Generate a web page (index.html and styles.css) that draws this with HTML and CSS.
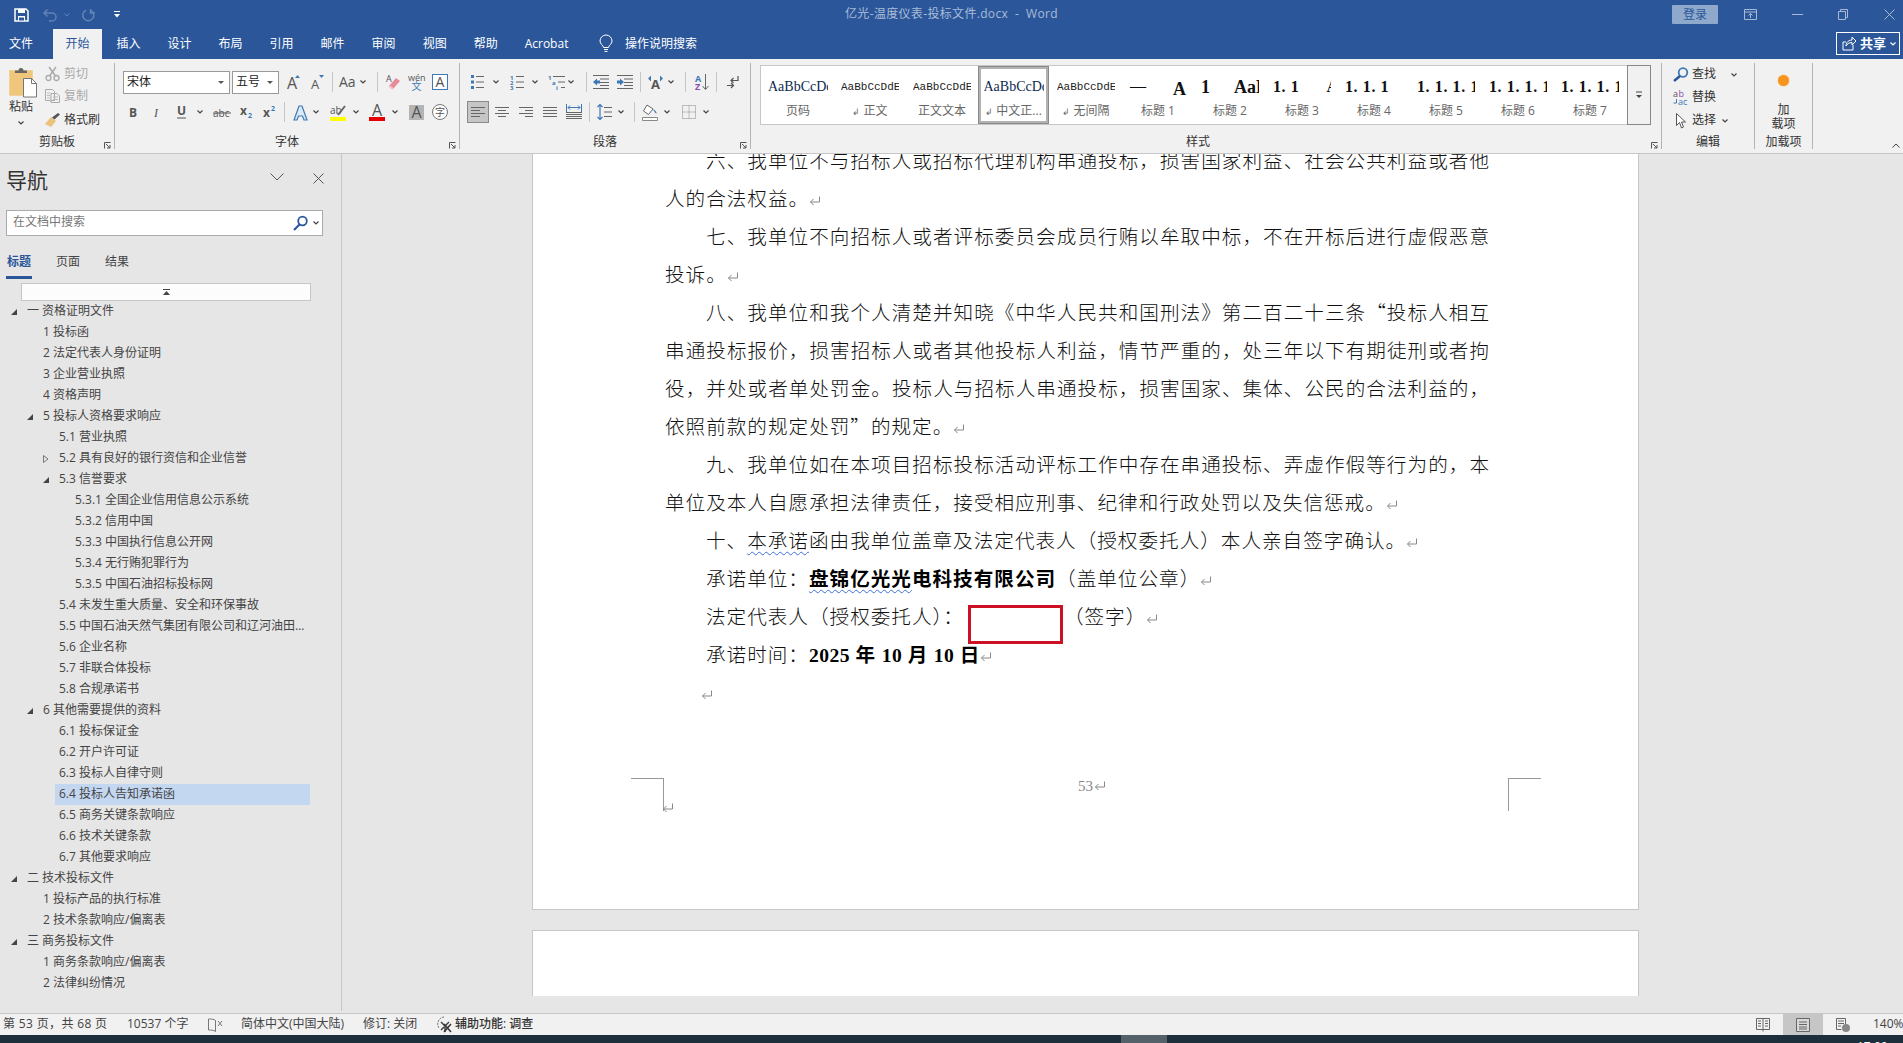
FILE: index.html
```html
<!DOCTYPE html>
<html lang="zh-CN">
<head>
<meta charset="utf-8">
<title>亿光-温度仪表-投标文件.docx - Word</title>
<link rel="stylesheet" href="styles.css">
</head>
<body>
<svg class="sprite" xmlns="http://www.w3.org/2000/svg">
  <symbol id="chev" viewBox="0 0 6 4"><path d="M.5.5 3 3 5.500.5" fill="none" stroke="#444" stroke-width="1.200"/></symbol>
  <symbol id="launch" viewBox="0 0 7 7"><path d="M.5 6.500V.5h6M2 2l4 4M3 6h3V3" fill="none" stroke="#555" stroke-width="1"/></symbol>
  <symbol id="lines" viewBox="0 0 14 12"><path d="M0 1.500h14M0 4.500h14M0 7.500h14M0 10.500h14" fill="none" stroke="#666" stroke-width="1"/></symbol>
  <symbol id="ret" viewBox="0 0 12 12"><path d="M10.500 1.500v5.500H1.500M4.500 4 1.500 7l3 3" fill="none" stroke="#888" stroke-width="1"/></symbol>
  <symbol id="open" viewBox="0 0 6 6"><path d="M6 0V6H0Z" fill="#444"/></symbol>
  <symbol id="closed" viewBox="0 0 6 8"><path d="M.5.5 5 4 .5 7.500Z" fill="none" stroke="#777"/></symbol>
</svg>
<div class="app">
  <header class="titlebar">
    <div class="qat">
      <svg class="ml14" width="15" height="14" viewBox="0 0 15 14"><path d="M1 1h11l2 2v10H1Z" fill="none" stroke="#fff" stroke-width="1.500"/><path d="M4 1h7v4H4ZM4 8h7v5H4Z" fill="#fff"/><path d="M5 9.500h5v3H5Z" fill="#2b579a"/></svg>
      <svg class="ml14" width="14" height="14" viewBox="0 0 14 14"><path d="M4.500 1.500 1 5l3.500 3.500M1 5h8a4 4 0 0 1 0 8H6" fill="none" stroke="#6283b5" stroke-width="1.500"/></svg>
      <svg class="ml7" width="6" height="4" viewBox="0 0 6 4"><path d="M.5.5 3 3 5.500.5" fill="none" stroke="#6283b5"/></svg>
      <svg class="ml11" width="14" height="14" viewBox="0 0 14 14"><path d="M5 2.200a5.500 5.500 0 1 0 4.500 0M9.500 1v4H14" fill="none" stroke="#6283b5" stroke-width="1.500"/></svg>
      <svg class="ml19" width="6" height="7" viewBox="0 0 6 7"><path d="M0 .5h6" stroke="#fff"/><path d="M0 3h6L3 6.500Z" fill="#fff"/></svg>
    </div>
    <div class="doc-title">亿光-温度仪表-投标文件.docx &nbsp;-&nbsp; Word</div>
    <div class="winctl">
      <span class="login">登录</span>
      <svg class="ml26" width="13" height="11" viewBox="0 0 13 11"><path d="M.5.500h12v10H.500ZM.5 3h12M6.500 9V4.500M4.500 6.500l2-2 2 2" fill="none" stroke="#a6b9d6"/></svg>
      <svg class="ml35" width="11" height="1" viewBox="0 0 11 1"><path d="M0 .5h11" stroke="#a6b9d6"/></svg>
      <svg class="ml35" width="10" height="11" viewBox="0 0 10 11"><path d="M.5 2.500h7v8h-7ZM2.500 2.500V.5h7v8h-2" fill="none" stroke="#a6b9d6"/></svg>
      <svg class="ml36" width="11" height="11" viewBox="0 0 11 11"><path d="M.5.500l10 10M10.500.500l-10 10" stroke="#a6b9d6"/></svg>
      <span class="ml8"></span>
    </div>
  </header>

  <nav class="tabs">
    <span class="tab tab-file">文件</span>
    <span class="tab tab-on">开始</span>
    <span class="tab">插入</span>
    <span class="tab">设计</span>
    <span class="tab">布局</span>
    <span class="tab">引用</span>
    <span class="tab">邮件</span>
    <span class="tab">审阅</span>
    <span class="tab">视图</span>
    <span class="tab">帮助</span>
    <span class="tab">Acrobat</span>
    <svg class="bulb" width="14" height="18" viewBox="0 0 14 18"><path d="M4.500 12.500C4 10 1 9 1 6a6 6 0 0 1 12 0c0 3-3 4-3.500 6.500ZM5 14.500h4M5.500 16.500h3" fill="none" stroke="#fff"/></svg>
    <span class="tell">操作说明搜索</span>
    <span class="share">
      <svg width="14" height="15" viewBox="0 0 14 15"><path d="M4 6H1v8h10v-5M4 10c0-4 3-6 6-6V1l4 4-4 4V6.500C7 6.500 5 8 4 10Z" fill="none" stroke="#fff"/></svg>
      <b>共享</b>
      <svg width="6" height="4" viewBox="0 0 6 4"><path d="M.5.5 3 3 5.500.5" fill="none" stroke="#fff" stroke-width="1.200"/></svg>
    </span>
  </nav>

  <section class="ribbon">
    <div class="grp g-clip">
      <div class="clip-body">
        <div class="paste">
          <svg width="28" height="30" viewBox="0 0 28 30"><path d="M1 3h22v24H1Z" fill="#f0c67c" stroke="#f0c67c" stroke-width="1.500"/><path d="M6 5V2.500h3.500a2.500 2.500 0 0 1 5 0H18V5Z" fill="#666"/><path d="M14.500 10.500h8l5 5v13.500h-13Z" fill="#fff" stroke="#777"/><path d="M22.500 10.500v5h5" fill="none" stroke="#777"/></svg>
          <span class="paste-t">粘贴</span>
          <svg class="paste-c" width="6" height="4"><use href="#chev"/></svg>
        </div>
        <div class="clip-cmds">
          <div class="cmd dim"><svg width="15" height="14" viewBox="0 0 15 14"><circle cx="3.500" cy="11" r="2.500" fill="none" stroke="#aaa" stroke-width="1.300"/><circle cx="11.500" cy="11" r="2.500" fill="none" stroke="#aaa" stroke-width="1.300"/><path d="M4.500 9 11 0M10.500 9 4 0" stroke="#aaa" stroke-width="1.500"/></svg><span>剪切</span></div>
          <div class="cmd dim"><svg width="15" height="14" viewBox="0 0 15 14"><path d="M.5.500h7l2 2v9h-9ZM6 4.500h6l2.500 2.500v6.500H6Z" fill="#f1f1f1" stroke="#aaa"/><path d="M2 4h3M2 6.500h3M2 9h3M8 8h5M8 10.500h5" stroke="#bbb"/></svg><span>复制</span></div>
          <div class="cmd cmd3"><svg width="15" height="14" viewBox="0 0 15 14"><path d="M0 11 6 4l5 4-5 6Z" fill="#ecc27c"/><path d="M7 4.500 9.500 6.500 15 1.500 13 0Z" fill="#555"/></svg><span>格式刷</span></div>
        </div>
      </div>
      <div class="glabel">剪贴板<svg class="launch" width="7" height="7"><use href="#launch"/></svg></div>
    </div>

    <div class="grp g-font">
      <div class="rows">
        <div class="row">
          <span class="combo ml8 c-font"><span>宋体</span><i></i></span>
          <span class="combo ml2 c-size"><span>五号</span><i></i></span>
          <svg class="ml8" width="14" height="18" viewBox="0 0 14 18"><text x="0" y="16" class="t14">A</text><path d="M8 5 10.500 2 13 5Z" fill="#3f79b5"/></svg>
          <svg class="ml10" width="14" height="18" viewBox="0 0 14 18"><text x="0" y="16" class="t12">A</text><path d="M8 2h5l-2.500 3Z" fill="#3f79b5"/></svg>
          <span class="vsep ml7"></span>
          <svg class="ml6" width="16" height="14" viewBox="0 0 16 14"><text x="0" y="12" class="t13">Aa</text></svg>
          <svg class="ml5" width="6" height="4"><use href="#chev"/></svg>
          <span class="vsep ml11"></span>
          <svg class="ml8" width="14" height="18" viewBox="0 0 14 18"><text x="0" y="9" class="t9">A</text><path d="M3 13 10 5l4 3-7 8Z" fill="#e88a9a"/><path d="M3 13l4 3" stroke="#f4c2cb" stroke-width="2"/></svg>
          <svg class="ml8" width="17" height="18" viewBox="0 0 17 18"><text x="0" y="7.500" class="t9">wén</text><text x="3.500" y="17" class="t10b">文</text></svg>
          <svg class="ml7" width="16" height="16" viewBox="0 0 16 16"><rect x=".5" y=".5" width="15" height="15" fill="#fff" stroke="#3f79b5"/><text x="3.500" y="13" class="t13">A</text></svg>
        </div>
        <div class="row">
          <svg class="ml14" width="9" height="12" viewBox="0 0 9 12"><text x="0" y="11" class="t12b">B</text></svg>
          <svg class="ml16" width="7" height="12" viewBox="0 0 7 12"><text x="0" y="11" class="t12i">I</text></svg>
          <svg class="ml16" width="9" height="14" viewBox="0 0 9 14"><text x="0" y="10" class="t12b">U</text><path d="M0 13h9" stroke="#555"/></svg>
          <svg class="ml11" width="6" height="4"><use href="#chev"/></svg>
          <svg class="ml10" width="18" height="12" viewBox="0 0 18 12"><text x="0" y="11" class="t10">abc</text><path d="M0 7h18" stroke="#555"/></svg>
          <svg class="ml9" width="12" height="14" viewBox="0 0 12 14"><text x="0" y="10" class="t12b">x</text><text x="8" y="13" class="t7b">2</text></svg>
          <svg class="ml11" width="12" height="14" viewBox="0 0 12 14"><text x="0" y="12" class="t12b">x</text><text x="8" y="6" class="t7b">2</text></svg>
          <span class="vsep ml9"></span>
          <svg class="ml8" width="15" height="17" viewBox="0 0 15 17"><path d="M1 16 6 2h3l5 14h-3L9.500 12h-4L4 16Z" fill="#dbe8f6" stroke="#3f79b5" stroke-width="1.200"/></svg>
          <svg class="ml5" width="6" height="4"><use href="#chev"/></svg>
          <svg class="ml11" width="16" height="17" viewBox="0 0 16 17"><text x="0" y="10" class="t10">ab</text><path d="M8 11 15 2" stroke="#666" stroke-width="2"/><path d="M0 13h16v4H0Z" fill="#ff0"/></svg>
          <svg class="ml7" width="6" height="4"><use href="#chev"/></svg>
          <svg class="ml10" width="16" height="17" viewBox="0 0 16 17"><text x="3" y="12" class="t14">A</text><path d="M0 13h16v4H0Z" fill="#e60000"/></svg>
          <svg class="ml7" width="6" height="4"><use href="#chev"/></svg>
          <svg class="ml11" width="15" height="15" viewBox="0 0 15 15"><path d="M0 0h15v15H0Z" fill="#b4b4b4"/><text x="2.500" y="13" class="t14">A</text></svg>
          <svg class="ml8" width="16" height="16" viewBox="0 0 16 16"><circle cx="8" cy="8" r="7.500" fill="#fff" stroke="#777"/><text x="3" y="12" class="t10">字</text></svg>
        </div>
      </div>
      <div class="glabel">字体<svg class="launch" width="7" height="7"><use href="#launch"/></svg></div>
    </div>

    <div class="grp g-para">
      <div class="rows">
        <div class="row">
          <svg class="ml11" width="13" height="14" viewBox="0 0 13 14"><path d="M0 0h3v3H0ZM0 5.500h3v3H0ZM0 11h3v3H0Z" fill="#3f79b5"/><path d="M5 1.500h8M5 7h8M5 12.500h8" stroke="#666"/></svg>
          <svg class="ml9" width="6" height="4"><use href="#chev"/></svg>
          <svg class="ml11" width="14" height="16" viewBox="0 0 14 16"><text x="0" y="5.500" class="t6">1</text><text x="0" y="11" class="t6">2</text><text x="0" y="16" class="t6">3</text><path d="M6 2.500h8M6 8h8M6 13.500h8" stroke="#666"/></svg>
          <svg class="ml8" width="6" height="4"><use href="#chev"/></svg>
          <svg class="ml10" width="17" height="16" viewBox="0 0 17 16"><text x="0" y="5.500" class="t6">1</text><text x="4" y="11" class="t6">a</text><text x="8" y="16" class="t6">i</text><path d="M5 2.500h12M10 8h7M13 13.500h4" stroke="#666"/></svg>
          <svg class="ml3" width="6" height="4"><use href="#chev"/></svg>
          <span class="vsep ml12"></span>
          <svg class="ml6" width="16" height="14" viewBox="0 0 16 14"><path d="M0 .5h16M7 4h9M7 7.500h9M7 10.500h9M0 13.500h16" stroke="#666"/><path d="M0 7l4-3.500v2h3v3H4v2Z" fill="#3f79b5"/></svg>
          <svg class="ml8" width="16" height="14" viewBox="0 0 16 14"><path d="M0 .5h16M7 4h9M7 7.500h9M7 10.500h9M0 13.500h16" stroke="#666"/><path d="M7 7 3 3.500v2H0v3h3v2Z" fill="#3f79b5"/></svg>
          <span class="vsep ml7"></span>
          <svg class="ml7" width="15" height="16" viewBox="0 0 15 16"><text x="3" y="15" class="t13b">A</text><path d="M0 4.500 3 1.500v6ZM15 4.500 12 1.500v6Z" fill="#3f79b5"/></svg>
          <svg class="ml5" width="6" height="4"><use href="#chev"/></svg>
          <span class="vsep ml11"></span>
          <svg class="ml9" width="14" height="17" viewBox="0 0 14 17"><text x="0" y="7.500" class="t8blue">A</text><text x="0" y="16" class="t8pur">Z</text><path d="M10.500 0v15M7.500 12l3 3.500 3-3.500" fill="none" stroke="#666"/></svg>
          <span class="vsep ml7"></span>
          <svg class="ml10" width="11" height="13" viewBox="0 0 11 13"><path d="M11 0v4.500H4M6.500 2 4 4.500 6.500 7" fill="none" stroke="#555" stroke-width="1.200"/><path d="M0 9.500h6M4 7l2.500 2.500L4 12" fill="none" stroke="#555" stroke-width="1.200"/></svg>
        </div>
        <div class="row">
          <span class="align-on ml7"><svg width="14" height="12" viewBox="0 0 14 12"><path d="M0 1.500h14M0 4.500h9M0 7.500h14M0 10.500h9" stroke="#666"/></svg></span>
          <svg class="ml6" width="14" height="12" viewBox="0 0 14 12"><path d="M0 1.500h14M3 4.500h8M0 7.500h14M3 10.500h8" stroke="#666"/></svg>
          <svg class="ml10" width="14" height="12" viewBox="0 0 14 12"><path d="M0 1.500h14M6 4.500h8M0 7.500h14M6 10.500h8" stroke="#666"/></svg>
          <svg class="ml10" width="14" height="12"><use href="#lines"/></svg>
          <svg class="ml9" width="16" height="16" viewBox="0 0 16 16"><path d="M.5 0v8M15.500 0v8M2 3.500h12M4 1.500l-2 2 2 2M12 1.500l2 2-2 2" fill="none" stroke="#3f79b5"/><path d="M0 8.500h16M0 10.500h16M0 12.500h16M0 14.500h16" stroke="#666"/></svg>
          <span class="vsep ml7"></span>
          <svg class="ml7" width="15" height="16" viewBox="0 0 15 16"><path d="M3 0v16M.5 3 3 .5 5.500 3M.5 13 3 15.500 5.500 13" fill="none" stroke="#3f79b5" stroke-width="1.200"/><path d="M7 3.500h8M7 8h8M7 12.500h8" stroke="#666"/></svg>
          <svg class="ml6" width="6" height="4"><use href="#chev"/></svg>
          <span class="vsep ml10"></span>
          <svg class="ml7" width="16" height="17" viewBox="0 0 16 17"><path d="M5 1 1.500 7l5 3.500L11 5Z" fill="#fff" stroke="#666"/><path d="M11 5c2 1 4 3 3.500 5C13 9 12 7 11 5Z" fill="#3f79b5"/><path d="M.5 13.500h15v3H.5Z" fill="#fff" stroke="#888"/></svg>
          <svg class="ml6" width="6" height="4"><use href="#chev"/></svg>
          <svg class="ml12" width="14" height="14" viewBox="0 0 14 14"><path d="M.5.500h13v13H.5ZM7 .5v13M.5 7h13" fill="none" stroke="#888" stroke-dasharray="1 1"/></svg>
          <svg class="ml7" width="6" height="4"><use href="#chev"/></svg>
        </div>
      </div>
      <div class="glabel">段落<svg class="launch" width="7" height="7"><use href="#launch"/></svg></div>
    </div>

    <div class="grp g-styles">
      <div class="gal-wrap">
        <div class="gallery">
          <div class="sty"><div class="pv pv-serif">AaBbCcDdEe</div><div class="sl">页码</div></div>
          <div class="sty"><div class="pv pv-mono">AaBbCcDdEe</div><div class="sl"><small>↲</small> 正文</div></div>
          <div class="sty"><div class="pv pv-mono">AaBbCcDdEe</div><div class="sl">正文文本</div></div>
          <div class="sty sty-on"><div class="pv pv-serif">AaBbCcDdEe</div><div class="sl"><small>↲</small> 中文正...</div></div>
          <div class="sty"><div class="pv pv-mono">AaBbCcDdEe</div><div class="sl"><small>↲</small> 无间隔</div></div>
          <div class="sty"><div class="pv pv-h pv-h1"><span class="thin">一</span><em>A</em></div><div class="sl">标题 1</div></div>
          <div class="sty"><div class="pv pv-h pv-h1">1<em class="e2">AaB</em></div><div class="sl">标题 2</div></div>
          <div class="sty"><div class="pv pv-h">1. 1<em class="e3">A</em></div><div class="sl">标题 3</div></div>
          <div class="sty"><div class="pv pv-h">1. 1. 1</div><div class="sl">标题 4</div></div>
          <div class="sty"><div class="pv pv-h">1. 1. 1. 1</div><div class="sl">标题 5</div></div>
          <div class="sty"><div class="pv pv-h">1. 1. 1. 1</div><div class="sl">标题 6</div></div>
          <div class="sty"><div class="pv pv-h">1. 1. 1. 1</div><div class="sl">标题 7</div></div>
        </div>
        <div class="gal-more"><svg width="8" height="8" viewBox="0 0 8 8"><path d="M1 1h6" stroke="#444"/><path d="M1 4h6L4 7Z" fill="#444"/></svg></div>
      </div>
      <div class="glabel gl-sty">样式<svg class="launch" width="7" height="7"><use href="#launch"/></svg></div>
    </div>

    <div class="grp g-edit">
      <div class="edit-rows">
        <div class="ecmd"><svg width="16" height="15" viewBox="0 0 16 15"><circle cx="10" cy="5.500" r="4.300" fill="none" stroke="#3f79b5" stroke-width="1.800"/><path d="M7 9 1 14" stroke="#2b579a" stroke-width="2.400"/></svg><span>查找</span><svg class="ml12" width="6" height="4"><use href="#chev"/></svg></div>
        <div class="ecmd"><svg width="16" height="16" viewBox="0 0 16 16"><text x="0" y="7" class="t9">a</text><text x="5.500" y="7" class="t9pur">b</text><text x="5" y="15" class="t9blue">ac</text><path d="M3.500 9v4h-3" fill="none" stroke="#3f79b5"/></svg><span>替换</span></div>
        <div class="ecmd"><svg class="ml3" width="10" height="16" viewBox="0 0 10 16"><path d="M.5.500v12l3-3 2 5.500 2-1-2-5h4Z" fill="#fff" stroke="#555"/></svg><span class="ml3">选择</span><svg class="ml3" width="6" height="4"><use href="#chev"/></svg></div>
      </div>
      <div class="glabel">编辑</div>
    </div>

    <div class="grp g-addin">
      <div class="addin-body">
        <span class="dot"></span>
        <span>加</span>
        <span>载项</span>
      </div>
      <div class="glabel">加载项</div>
    </div>

    <svg class="collapse" width="8" height="5" viewBox="0 0 8 5"><path d="M.5 4.500 4 1l3.500 3.500" fill="none" stroke="#444"/></svg>
  </section>

  <main class="main">
    <aside class="nav">
      <div class="nav-head">
        <span class="nav-title">导航</span>
        <svg class="nav-chev" width="14" height="8" viewBox="0 0 14 8"><path d="M.5.500 7 7l6.500-6.500" fill="none" stroke="#555"/></svg>
        <svg class="nav-x" width="11" height="11" viewBox="0 0 11 11"><path d="M.5.500l10 10M10.500.500l-10 10" stroke="#555"/></svg>
      </div>
      <div class="nav-search">
        <span>在文档中搜索</span>
        <svg width="15" height="16" viewBox="0 0 15 16"><circle cx="9.500" cy="6" r="4.300" fill="none" stroke="#2b579a" stroke-width="1.800"/><path d="M6.500 9.500 1 15" stroke="#2b579a" stroke-width="2.200"/></svg>
        <svg class="ml5" width="6" height="4"><use href="#chev"/></svg>
      </div>
      <div class="nav-tabs">
        <span class="nt nt-on">标题</span><span class="nt">页面</span><span class="nt">结果</span>
      </div>
      <div class="nav-up"><svg width="7" height="6" viewBox="0 0 7 6"><path d="M0 .5h7" stroke="#444"/><path d="M0 6l3.500-4L7 6Z" fill="#444"/></svg></div>
      <div class="tree">
        <div class="tr l0"><svg class="tw" width="6" height="6"><use href="#open"/></svg><span class="tt">一 资格证明文件</span></div>
        <div class="tr l1"><span class="tw"></span><span class="tt">1 投标函</span></div>
        <div class="tr l1"><span class="tw"></span><span class="tt">2 法定代表人身份证明</span></div>
        <div class="tr l1"><span class="tw"></span><span class="tt">3 企业营业执照</span></div>
        <div class="tr l1"><span class="tw"></span><span class="tt">4 资格声明</span></div>
        <div class="tr l1"><svg class="tw" width="6" height="6"><use href="#open"/></svg><span class="tt">5 投标人资格要求响应</span></div>
        <div class="tr l2"><span class="tw"></span><span class="tt">5.1 营业执照</span></div>
        <div class="tr l2"><svg class="tw" width="6" height="8"><use href="#closed"/></svg><span class="tt">5.2 具有良好的银行资信和企业信誉</span></div>
        <div class="tr l2"><svg class="tw" width="6" height="6"><use href="#open"/></svg><span class="tt">5.3 信誉要求</span></div>
        <div class="tr l3"><span class="tw"></span><span class="tt">5.3.1 全国企业信用信息公示系统</span></div>
        <div class="tr l3"><span class="tw"></span><span class="tt">5.3.2 信用中国</span></div>
        <div class="tr l3"><span class="tw"></span><span class="tt">5.3.3 中国执行信息公开网</span></div>
        <div class="tr l3"><span class="tw"></span><span class="tt">5.3.4 无行贿犯罪行为</span></div>
        <div class="tr l3"><span class="tw"></span><span class="tt">5.3.5 中国石油招标投标网</span></div>
        <div class="tr l2"><span class="tw"></span><span class="tt">5.4 未发生重大质量、安全和环保事故</span></div>
        <div class="tr l2"><span class="tw"></span><span class="tt">5.5 中国石油天然气集团有限公司和辽河油田公司相关要求</span></div>
        <div class="tr l2"><span class="tw"></span><span class="tt">5.6 企业名称</span></div>
        <div class="tr l2"><span class="tw"></span><span class="tt">5.7 非联合体投标</span></div>
        <div class="tr l2"><span class="tw"></span><span class="tt">5.8 合规承诺书</span></div>
        <div class="tr l1"><svg class="tw" width="6" height="6"><use href="#open"/></svg><span class="tt">6 其他需要提供的资料</span></div>
        <div class="tr l2"><span class="tw"></span><span class="tt">6.1 投标保证金</span></div>
        <div class="tr l2"><span class="tw"></span><span class="tt">6.2 开户许可证</span></div>
        <div class="tr l2"><span class="tw"></span><span class="tt">6.3 投标人自律守则</span></div>
        <div class="tr l2 sel"><span class="tw"></span><span class="tt">6.4 投标人告知承诺函</span></div>
        <div class="tr l2"><span class="tw"></span><span class="tt">6.5 商务关键条款响应</span></div>
        <div class="tr l2"><span class="tw"></span><span class="tt">6.6 技术关键条款</span></div>
        <div class="tr l2"><span class="tw"></span><span class="tt">6.7 其他要求响应</span></div>
        <div class="tr l0"><svg class="tw" width="6" height="6"><use href="#open"/></svg><span class="tt">二 技术投标文件</span></div>
        <div class="tr l1"><span class="tw"></span><span class="tt">1 投标产品的执行标准</span></div>
        <div class="tr l1"><span class="tw"></span><span class="tt">2 技术条款响应/偏离表</span></div>
        <div class="tr l0"><svg class="tw" width="6" height="6"><use href="#open"/></svg><span class="tt">三 商务投标文件</span></div>
        <div class="tr l1"><span class="tw"></span><span class="tt">1 商务条款响应/偏离表</span></div>
        <div class="tr l1"><span class="tw"></span><span class="tt">2 法律纠纷情况</span></div>
      </div>
    </aside>

    <div class="workspace">
      <div class="doc">
        <article class="page">
          <div class="ln full ind">六、我单位不与招标人或招标代理机构串通投标，损害国家利益、社会公共利益或者他</div>
          <div class="ln">人的合法权益。<svg class="ret" width="12" height="12"><use href="#ret"/></svg></div>
          <div class="ln full ind">七、我单位不向招标人或者评标委员会成员行贿以牟取中标，不在开标后进行虚假恶意</div>
          <div class="ln">投诉。<svg class="ret" width="12" height="12"><use href="#ret"/></svg></div>
          <div class="ln full ind">八、我单位和我个人清楚并知晓《中华人民共和国刑法》第二百二十三条“投标人相互</div>
          <div class="ln full">串通投标报价，损害招标人或者其他投标人利益，情节严重的，处三年以下有期徒刑或者拘</div>
          <div class="ln full">役，并处或者单处罚金。投标人与招标人串通投标，损害国家、集体、公民的合法利益的，</div>
          <div class="ln">依照前款的规定处罚”的规定。<svg class="ret" width="12" height="12"><use href="#ret"/></svg></div>
          <div class="ln full ind">九、我单位如在本项目招标投标活动评标工作中存在串通投标、弄虚作假等行为的，本</div>
          <div class="ln">单位及本人自愿承担法律责任，接受相应刑事、纪律和行政处罚以及失信惩戒。<svg class="ret" width="12" height="12"><use href="#ret"/></svg></div>
          <div class="ln ind">十、<span class="sq">本承诺</span>函由我单位盖章及法定代表人（授权委托人）本人亲自签字确认。<svg class="ret" width="12" height="12"><use href="#ret"/></svg></div>
          <div class="ln ind">承诺单位：<b><span class="sq">盘锦亿光光</span>电科技有限公司</b>（盖单位公章）<svg class="ret" width="12" height="12"><use href="#ret"/></svg></div>
          <div class="ln ind">法定代表人（授权委托人）：<span class="redbox"></span>（签字）<svg class="ret" width="12" height="12"><use href="#ret"/></svg></div>
          <div class="ln ind">承诺时间：<b><span class="num">2025</span> 年 <span class="num">10</span> 月 <span class="num">10</span> 日</b><svg class="ret" width="12" height="12"><use href="#ret"/></svg></div>
          <div class="ln ind"><svg class="ret ret-solo" width="12" height="12"><use href="#ret"/></svg></div>
          <span class="crop crop-l"></span>
          <svg class="ret ret-crop" width="12" height="12"><use href="#ret"/></svg>
          <span class="crop crop-r"></span>
          <div class="pageno">53<svg class="ret" width="12" height="12"><use href="#ret"/></svg></div>
        </article>
        <article class="page page2"></article>
      </div>
    </div>
  </main>

  <footer class="status">
    <span class="st st1">第 53 页，共 68 页</span>
    <span class="st st2">10537 个字</span>
    <svg class="st-i1" width="15" height="14" viewBox="0 0 15 14"><path d="M7.500 2.500v11M7.500 2.500C6 1 3 1 .5 1v11c3 0 5 0 7 1.500" fill="none" stroke="#777"/><path d="M10 3l4 5M14 3l-4 5" stroke="#777"/></svg>
    <span class="st st3">简体中文(中国大陆)</span>
    <span class="st st4">修订: 关闭</span>
    <svg width="17" height="17" viewBox="0 0 17 17"><path d="M8 1a7 7 0 0 0-5 11" fill="none" stroke="#666" stroke-dasharray="2 1"/><path d="M5 6l4 4 0 6M9 10l4-4M5 14l3-3" stroke="#444" stroke-width="1.500" fill="none"/><path d="M8 8l7 8M15 8l-7 8" stroke="#333" stroke-width="1.500"/></svg>
    <span class="st st5">辅助功能: 调查</span>
    <span class="st-right">
      <svg width="14" height="14" viewBox="0 0 14 14"><path d="M.5.500h13v11h-13ZM7 .5v13M2 3h3M2 5.500h3M2 8h3M9 3h3M9 5.500h3M9 8h3" fill="none" stroke="#666"/></svg>
      <span class="view-on"><svg width="14" height="14" viewBox="0 0 14 14"><path d="M.5.500h13v13H.5ZM3 4h8M3 6.500h8M3 9h8M3 11h8" fill="#d8d8d8" stroke="#666"/></svg></span>
      <svg width="14" height="14" viewBox="0 0 14 14"><path d="M.5.500h9v8M.5.500v11h5M2 3h6M2 5.500h6M2 8h3" fill="none" stroke="#666"/><circle cx="10" cy="10" r="4" fill="#888"/></svg>
      <span class="zoom">140%</span>
    </span>
  </footer>
  <div class="taskbar"><span class="task-item"></span><span class="clock">17:00</span></div>
</div>
</body>
</html>
```

FILE: styles.css
```css
*{box-sizing:border-box}
html,body{margin:0;padding:0;height:100%;overflow:hidden}
body{font:12px/1.2 "Open Sans","Noto Sans CJK SC",sans-serif;color:#444;background:#e6e6e6}
.sprite{display:none}
svg{display:block;flex:none;overflow:visible}
svg text{font-family:"Open Sans","Noto Sans CJK SC",sans-serif;fill:#555}

.ml2{margin-left:2px}.ml3{margin-left:3px}.ml5{margin-left:5px}.ml6{margin-left:6px}.ml7{margin-left:7px}.ml8{margin-left:8px}
.ml9{margin-left:9px}.ml10{margin-left:10px}.ml11{margin-left:11px}.ml12{margin-left:12px}.ml14{margin-left:14px}
.ml16{margin-left:16px}.ml19{margin-left:19px}.ml26{margin-left:26px}.ml35{margin-left:35px}.ml36{margin-left:36px}

.t6{font-size:6px;fill:#3f79b5;font-weight:700}
.t7b{font-size:7px;fill:#3f79b5;font-weight:700}
.t8blue{font-size:9px;fill:#3f79b5;font-weight:700}
.t8pur{font-size:9px;fill:#8a4fb0;font-weight:700}
.t9{font-size:9px}
.t9pur{font-size:9px;fill:#8a4fb0}
.t9blue{font-size:9px;fill:#3f79b5}
.t10{font-size:10px}
.t10b{font-size:10px;fill:#3f79b5}
.t12{font-size:13px}
.t12b{font-size:12px;font-weight:700}
.t12i{font-size:12px;font-style:italic;font-family:"Liberation Serif",serif}
.t13{font-size:14px}
.t13b{font-size:13px;font-weight:700}
.t14{font-size:16px}

.app{width:1903px;height:1043px;display:flex;flex-direction:column;overflow:hidden}

.titlebar{height:29px;background:#2b579a;display:grid;grid-template-columns:1fr auto 1fr;align-items:center}
.qat{display:flex;align-items:center}
.doc-title{color:#a9bcd8;font-size:12px;letter-spacing:.33px}
.winctl{display:flex;align-items:center;justify-content:flex-end}
.login{width:46px;height:19px;background:#8fa9cd;color:#2b579a;text-align:center;line-height:19px;border-radius:1px}

.tabs{height:30px;background:#2b579a;display:flex;align-items:stretch;color:#fff}
.tab{padding:0 12.5px;margin-right:2px;line-height:30px}
.tab-file{padding:0 9px;margin-right:11px}
.tab-on{background:#f1f1f1;color:#2b579a}
.bulb{align-self:center;margin-left:16px}
.tell{line-height:30px;margin-left:12px}
.share{margin:3px 3px 4px auto;width:64px;border:1px solid #fff;display:flex;align-items:center;gap:4px;padding-left:5px}
.share b{font-size:13px;line-height:1}

.ribbon{height:95px;background:#f1f1f1;border-bottom:1px solid #c6c6c6;display:flex;position:relative;align-items:flex-start;color:#333}
.grp{margin-top:4px;height:86px;display:flex;flex-direction:column;border-right:1px solid #b4b4b4;flex:none}
.g-clip{width:115px}
.g-font{width:345px}
.g-para{width:291px}
.g-styles{width:911px}
.g-edit{width:93px}
.g-addin{width:58px}
.glabel{height:17px;padding-top:2px;line-height:15px;text-align:center;position:relative;flex:none;margin-top:auto}
.launch{position:absolute;right:3px;bottom:0}
.gl-sty{padding-right:16px}

.clip-body{flex:1;min-height:0;display:flex}
.paste{margin-left:9px;width:28px;padding-top:5px;display:flex;flex-direction:column;align-items:center}
.paste-t{margin-top:2px;line-height:13px;white-space:nowrap;width:24px;align-self:flex-start}
.paste-c{margin-top:8px;margin-right:4px}
.clip-cmds{margin-left:8px}
.cmd{height:22px;display:flex;align-items:center;gap:4px}
.cmd3{margin-top:2px}
.dim{color:#aaa}

.rows{flex:1;min-height:0;padding-top:7px}
.row{height:24px;display:flex;align-items:center}
.row + .row{margin-top:6px}
.combo{height:23px;background:#fff;border:1px solid #999;display:flex;align-items:center;justify-content:space-between;padding:0 5px 0 3px;color:#222;flex:none}
.combo i{border:3px solid transparent;border-top:3px solid #555;margin-top:3px}
.c-font{width:107px}
.c-size{width:47px}
.vsep{width:1px;height:20px;background:#c6c6c6;flex:none}
.align-on{width:22px;height:22px;background:#c6c6c6;border:1px solid #8a8a8a;display:flex;align-items:center;justify-content:center;flex:none}

.gal-wrap{display:flex;margin:2px 0 0 9px;height:60px;flex:none}
.gallery{width:867px;height:60px;background:#fff;border:1px solid #c6c6c6;border-right:0;padding-left:1px;display:flex;color:#666}
.gal-more{width:24px;height:60px;border:1px solid #888;display:flex;align-items:center;justify-content:center}
.sty{width:72px;height:58px;flex:none;display:flex;flex-direction:column;align-items:center;padding-top:11px;overflow:hidden}
.sty-on{width:71px;margin-right:1px;border:3px solid #b2b2b2;outline:1px solid #8a8a8a;outline-offset:-1px;padding-top:8px}
.pv{width:58px;height:20px;line-height:20px;overflow:hidden;white-space:nowrap;color:#111}
.pv-serif{font:14px/20px "Liberation Serif",serif;color:#0b2a52;width:60px}
.pv-mono{font:400 11px/20px "Liberation Mono",monospace;color:#222}
.pv-h{font:700 16px/20px "Liberation Serif",serif;letter-spacing:.6px}
.pv-h1{font-size:18px;letter-spacing:0}
.pv-h .thin{font:300 18px/20px "Noto Sans CJK SC",sans-serif}
.pv-h em{font-style:normal;margin-left:26px}
.pv-h em.e2{margin-left:24px}
.pv-h em.e3{margin-left:27px}
.sl{margin-top:7px;line-height:14px;white-space:nowrap}
.sl small{font-size:9px}

.edit-rows{flex:1;min-height:0;padding-left:11px}
.ecmd{height:23px;display:flex;align-items:center;gap:3px}
.addin-body{flex:1;min-height:0;display:flex;flex-direction:column;align-items:center;line-height:14px}
.dot{width:11px;height:11px;border-radius:50%;background:#f7941d;box-shadow:0 0 2px #f9c27a;margin:12px 0 17px;flex:none}
.collapse{position:absolute;right:3px;bottom:5px}

.main{height:859px;display:flex;flex:none}
.nav{width:342px;border-right:1px solid #c6c6c6;margin-bottom:2px;background:#e6e6e6;flex:none}
.nav-head{height:56px;display:flex;align-items:flex-start;padding-left:6px}
.nav-title{font-size:21px;line-height:52px;color:#333}
.nav-chev{margin:19px 0 0 222px}
.nav-x{margin:19px 0 0 29px}
.nav-search{margin:0 18px 0 6px;height:26px;background:#fff;border:1px solid #ababab;display:flex;align-items:center;padding:0 3px 0 6px;color:#777}
.nav-search span{flex:1;padding-bottom:2px}
.nav-tabs{margin-top:14px;height:29px;display:flex;padding-left:6px;gap:23px}
.nt{padding:4px 1px 0;line-height:16px}
.nt-on{color:#2b579a;font-weight:700;border-bottom:3px solid #2b579a}
.nav-up{margin:4px 30px 0 21px;height:18px;background:#fcfcfc;border:1px solid #c6c6c6;display:flex;align-items:center;justify-content:center}
.tree{width:310px}
.tr{height:21px;display:flex;align-items:center;color:#444}
.l0{padding-left:11px}.l1{padding-left:27px}.l2{padding-left:43px}.l3{padding-left:59px}
.tw{width:6px;margin-right:10px}
span.tw{flex:none}
.tt{flex:1;min-width:0;white-space:nowrap;overflow:hidden;text-overflow:ellipsis;line-height:19px;padding:0 4px 2px 0}
.sel .tw{margin-right:6px}
.sel .tt{background:#c3d7f1;padding-left:4px}

.workspace{flex:1;min-width:0}
.doc{height:842px;overflow:hidden;padding-left:190px}
.page{width:1107px;height:769px;margin-top:-13px;background:#fff;border:1px solid #c6c6c6;border-top:0;padding-left:132px;position:relative;font:300 19.6px/38px "Noto Sans CJK SC",sans-serif;color:#111}
.page2{height:120px;margin-top:20px;border-top:1px solid #c6c6c6}
.ln{width:824px;height:38px;letter-spacing:1px;white-space:nowrap;display:flow-root}
.ln svg{display:inline-block}
.ind{padding-left:41px}
.full{letter-spacing:0;text-align:justify;text-align-last:justify;white-space:normal;text-justify:inter-character}
.ret{vertical-align:-1px;margin-left:0}
.ret-solo{margin-left:-5px}
.sq{text-decoration:underline wavy #3d6fd8 1px;text-underline-offset:3px}
.ln b{font-weight:700;color:#000}
.num{font-family:"Liberation Serif",serif;letter-spacing:.5px}
.redbox{display:inline-block;width:95px;height:39px;border:3px solid #cc1124;background:#fff;vertical-align:-20px;margin:0 1px 0 4px}
.crop{position:absolute;width:33px;height:33px;top:637px;border-top:1px solid #999}
.crop-l{left:98px;border-right:1px solid #999}
.crop-r{left:975px;border-left:1px solid #999}
.ret-crop{position:absolute;left:129px;top:661px}
.pageno{position:absolute;left:545px;top:635px;font:15px/20px "Liberation Serif",serif;color:#888;display:flex;align-items:center}
.pageno .ret{margin-left:1px}

.status{height:22px;background:#f1f1f1;border-top:1px solid #c6c6c6;display:flex;align-items:center;color:#444;flex:none}
.st{white-space:nowrap;flex:none;display:block}
.st1{width:127px;padding-left:3px;letter-spacing:.35px}
.st2{width:81px}
.st-i1{margin-right:18px}
.st3{width:122px}
.st4{width:73px}
.st5{margin-left:2px;color:#333;font-weight:500}
.st-right{margin-left:auto;display:flex;align-items:center;height:21px}
.view-on{width:40px;height:21px;background:#c6c6c6;display:flex;align-items:center;justify-content:center;margin:0 13px}
.zoom{margin-left:23px;width:30px;white-space:nowrap}

.taskbar{height:8px;background:#1d2f3a;position:relative;overflow:hidden;flex:none}
.task-item{position:absolute;left:1121px;top:0;width:46px;height:8px;background:#54606a}
.clock{position:absolute;left:1857px;top:5px;color:#fff;line-height:14px}
```
